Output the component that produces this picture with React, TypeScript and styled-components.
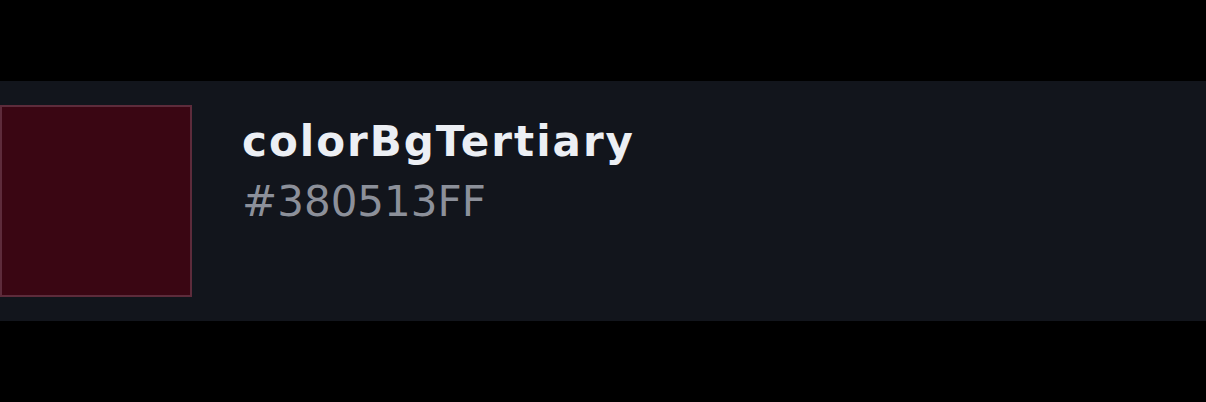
import React from "react";
import styled, { createGlobalStyle } from "styled-components";

const Global = createGlobalStyle`
  html, body { margin: 0; padding: 0; background: #000000; }
  body { font-family: "DejaVu Sans", "Noto Sans", sans-serif; }
`;

const Page = styled.div`
  width: 1206px;
  height: 402px;
  display: flex;
  flex-direction: column;
  justify-content: flex-start;
  padding-top: 81px;
  box-sizing: border-box;
`;

const Band = styled.div`
  height: 240px;
  background: #12151c;
  display: flex;
  align-items: flex-start;
  gap: 50px;
  padding-top: 24px;
  box-sizing: border-box;
`;

const Swatch = styled.div<{ $color: string }>`
  width: 192px;
  height: 192px;
  box-sizing: border-box;
  background: ${(p) => p.$color};
  border: 2px solid #5d2b3b;
  flex-shrink: 0;
`;

const Info = styled.div`
  display: flex;
  flex-direction: column;
  padding-top: 7px;
`;

const Name = styled.div`
  font-size: 42px;
  font-weight: 700;
  color: #eceff4;
  line-height: 60px;
  letter-spacing: 2px;
`;

const Hex = styled.div`
  font-size: 42px;
  font-weight: 400;
  color: #8c909a;
  line-height: 60px;
`;

export default function App() {
  return (
    <>
      <Global />
      <Page>
        <Band>
          <Swatch $color="#3a0613" />
          <Info>
            <Name>colorBgTertiary</Name>
            <Hex>#380513FF</Hex>
          </Info>
        </Band>
      </Page>
    </>
  );
}
